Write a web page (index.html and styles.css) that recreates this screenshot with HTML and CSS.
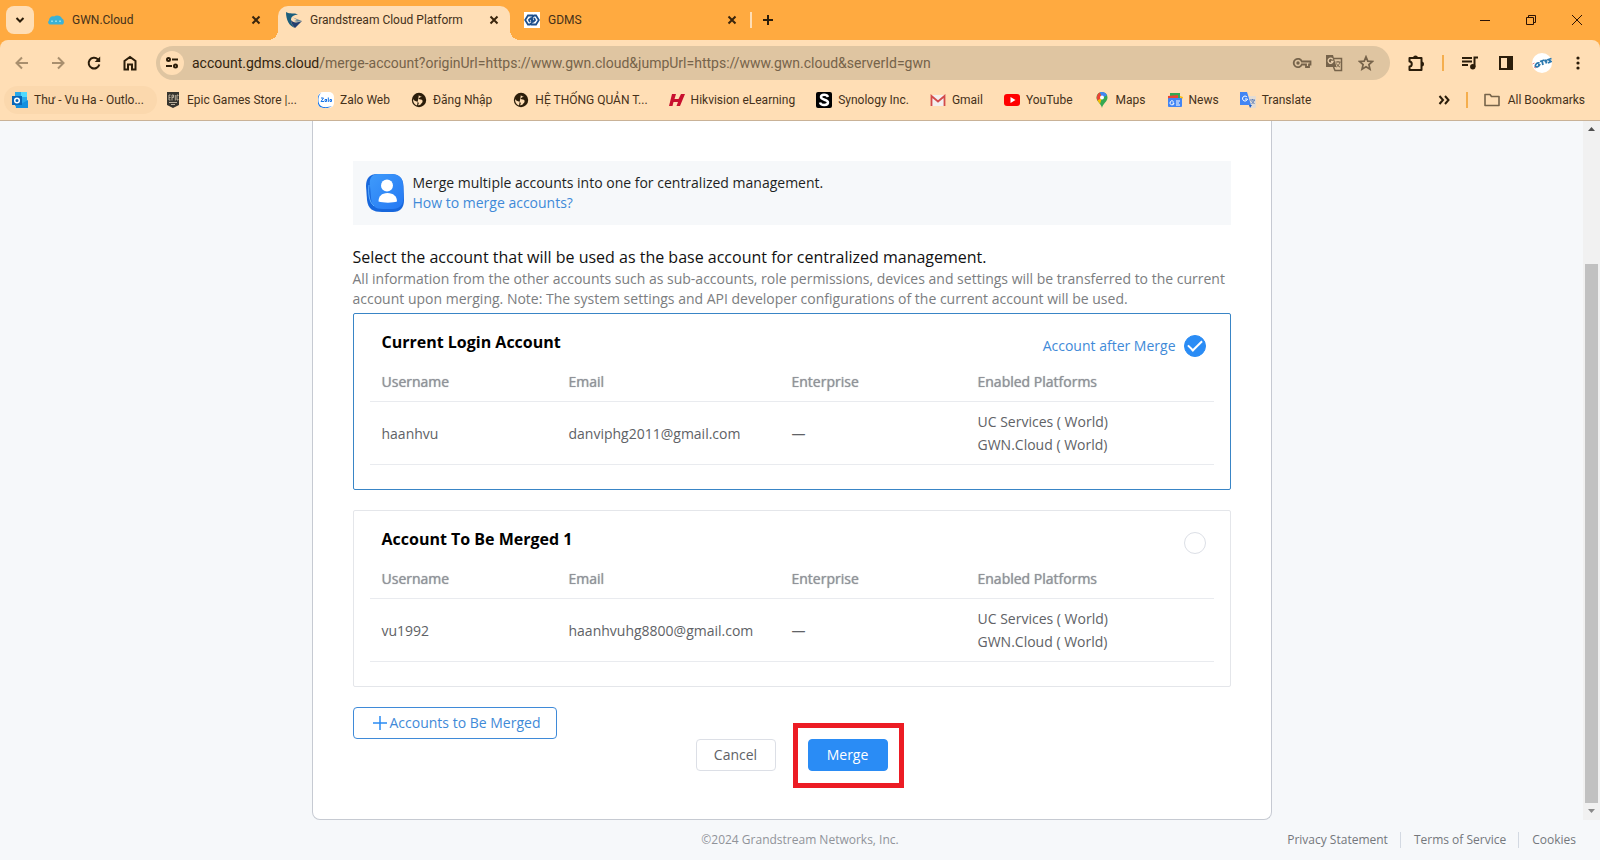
FILE: index.html
```html
<!DOCTYPE html>
<html lang="en">
<head>
<meta charset="utf-8">
<title>Grandstream Cloud Platform</title>
<link rel="stylesheet" href="styles.css">
</head>
<body>
<header class="browser">
  <div class="tabstrip">
    <button class="tab-search" aria-label="Search tabs"><svg width="12" height="12" viewBox="0 0 12 12"><path d="M2.500 4l3.500 3.500L9.500 4" fill="none" stroke="#2b1d0a" stroke-width="2"/></svg></button>
    <div class="tabs">
      <div class="tab">
        <svg class="icon" viewBox="0 0 16 16"><path d="M2 12.500c-2 0-2.500-3-1-4C1 5.500 4 3.500 6 4.500c3-2 7-.5 8 2 2.500 1 2.500 6 0 6z" fill="#3bb2d6"/><path d="M3 8.500h2v1.500H3zM7 8.500h2v1.500H7zM11 8.500h2v1.500h-2z" fill="#8ddbe9"/></svg>
        <span class="tab-title">GWN.Cloud</span>
        <button class="tab-close" aria-label="Close GWN.Cloud"><svg width="10" height="10" viewBox="0 0 10 10"><path d="M1.500 1.500l7 7m0-7l-7 7"/></svg></button>
      </div>
      <div class="tab active">
        <svg class="icon" viewBox="0 0 16 16"><path d="M0 0c4 2.500 8 .5 12 2.500C8 3 5 4 5 8c0 3 1.500 5.500 4 8C3 14 0 8 0 0z" fill="#1c5e7c"/><path d="M5 8c2 3 6 3 11 1l-7 7c-2.500-2.500-4-5-4-8z" fill="#243f70"/><path d="M7 5.500l9 3.500c-3 1-6 1-8 0l3-1z" fill="#6c8d9c"/></svg>
        <span class="tab-title">Grandstream Cloud Platform</span>
        <button class="tab-close" aria-label="Close Grandstream Cloud Platform"><svg width="10" height="10" viewBox="0 0 10 10"><path d="M1.500 1.500l7 7m0-7l-7 7"/></svg></button>
      </div>
      <div class="tab">
        <svg class="icon" viewBox="0 0 16 16"><path d="M0 0h16v16H0z" fill="#fff"/><g fill="none" stroke="#1d4f8c" stroke-width="1.800"><path d="M9 3.500H4L1.200 8 4 12.500h2l2-2V7.500L6.500 6.500 5 8l1 2"/><path d="M7 12.500h5L14.800 8 12 3.500h-2l-2 2v3l1.500 1L11 8l-1-2"/></g></svg>
        <span class="tab-title">GDMS</span>
        <button class="tab-close" aria-label="Close GDMS"><svg width="10" height="10" viewBox="0 0 10 10"><path d="M1.500 1.500l7 7m0-7l-7 7"/></svg></button>
      </div>
      <span class="tab-divider"></span>
      <button class="new-tab" aria-label="New tab"><svg width="12" height="12" viewBox="0 0 12 12"><path d="M6 1v10M1 6h10" stroke="#2b1d0a" stroke-width="2"/></svg></button>
    </div>
    <div class="window-controls">
      <button aria-label="Minimize"><svg width="12" height="12" viewBox="0 0 12 12"><path d="M1 6.500h10"/></svg></button>
      <button aria-label="Restore"><svg width="12" height="12" viewBox="0 0 12 12"><path d="M1.500 3.500h7v7h-7zM3.500 3.500v-2h7v7h-2"/></svg></button>
      <button aria-label="Close window"><svg width="12" height="12" viewBox="0 0 12 12"><path d="M1 1l10 10M11 1L1 11"/></svg></button>
    </div>
  </div>

  <div class="toolbar">
    <div class="nav">
      <button aria-label="Back"><svg class="dim" width="16" height="16" viewBox="0 0 16 16"><path d="M14 8H3M8 2.500L2.500 8 8 13.500"/></svg></button>
      <button aria-label="Forward"><svg class="dim" width="16" height="16" viewBox="0 0 16 16"><path d="M2 8h11M8 2.500L13.500 8 8 13.500"/></svg></button>
      <button aria-label="Reload"><svg width="16" height="16" viewBox="0 0 16 16"><path d="M13.300 9.500A5.400 5.400 0 1 1 11.800 4.200L13 5.500"/><path d="M14.200 1.500v5.500H8.700z" class="tip"/></svg></button>
      <button aria-label="Home"><svg width="16" height="16" viewBox="0 0 16 16"><path d="M2.500 14.500V6L8 2l5.500 4v8.500H10v-5H6v5z"/></svg></button>
    </div>
    <div class="omnibox">
      <button class="site-info" aria-label="Site information"><svg width="16" height="16" viewBox="0 0 16 16"><g fill="none" stroke="#2b1d0a" stroke-width="2"><circle cx="4.500" cy="4.500" r="1.500"/><path d="M8 4.500h6M2 11h6"/><circle cx="11.500" cy="11" r="1.500"/></g></svg></button>
      <div class="url">account.gdms.cloud<span>/merge-account?originUrl=https://www.gwn.cloud&amp;jumpUrl=https://www.gwn.cloud&amp;serverId=gwn</span></div>
      <div class="omni-actions">
        <button aria-label="Passwords"><svg width="20" height="16" viewBox="0 0 20 16"><g fill="none" stroke="#76634a" stroke-width="1.800"><path d="M9.800 6.500H18.500v3H17V12h-3V9.500H9.800A4.200 4.200 0 1 1 9.800 6.500z"/></g><circle cx="6" cy="8" r="1.700" fill="#76634a"/></svg></button>
        <button aria-label="Translate page"><svg width="18" height="18" viewBox="0 0 18 18"><path d="M7 4.500h9.500v12H10L8.500 13" fill="none" stroke="#76634a" stroke-width="1.500"/><path d="M1 1h7l3.500 12H1z" fill="#76634a"/><path d="M7.800 5.500A2.500 2.500 0 1 0 8 7.500H6" fill="none" stroke="#e9cfad" stroke-width="1.300"/><path d="M10.500 8h5M13 7v1m2 0c-.5 2-2 4-3.500 5M11.500 9.500c1 2 2 3 3.500 3.500" fill="none" stroke="#76634a"/></svg></button>
        <button aria-label="Bookmark this page"><svg width="16" height="16" viewBox="0 0 16 16"><path d="M8 1.800l1.800 4.300 4.700.4-3.600 3.100 1.100 4.600L8 11.800l-4 2.400 1.100-4.600L1.500 6.500l4.700-.4z" fill="none" stroke="#76634a" stroke-width="1.700"/></svg></button>
      </div>
    </div>
    <div class="tools">
      <button aria-label="Extensions"><svg width="18" height="18" viewBox="0 0 18 18"><path d="M2.500 4h12v12h-12v-3.500c3 0 3-5 0-5z" fill="none" stroke="#2b1d0a" stroke-width="2" stroke-linejoin="round"/><path d="M6 4a2.300 2.300 0 0 1 5 0zM14.500 7.500a2.300 2.300 0 0 1 0 5z" fill="#2b1d0a"/></svg></button>
      <span class="orange-divider"></span>
      <button aria-label="Media"><svg width="18" height="18" viewBox="0 0 18 18"><path d="M1 4h10M1 7.500h10M1 11h6M13.500 13V3.500H17" fill="none" stroke="#2b1d0a" stroke-width="2"/><circle cx="11.800" cy="12.800" r="2.700" fill="#2b1d0a"/></svg></button>
      <button aria-label="Side panel"><svg width="16" height="16" viewBox="0 0 16 16"><path d="M2 2h12v12H2z" fill="none" stroke="#2b1d0a" stroke-width="2"/><path d="M9 2h5v12H9z" fill="#2b1d0a"/></svg></button>
      <button aria-label="Profile"><svg width="20" height="20" viewBox="0 0 20 20"><circle cx="10" cy="10" r="10" fill="#fff"/><g fill="none" stroke="#2b78ae" stroke-width="1.800"><path d="M7.500 10c-3-.5-4.500 2-4 3.500 1 1 3.500 0 4-1.500H6M8 8.500l4.500-1.500M10 8l1 4M13.500 6.500l1 4M12.500 8.500l3-1M19.500 5.500l-3 1 2.500 2-3 1.500"/></g><path d="M.5 11l2-1M2 14l2 1" stroke="#e78080"/></svg></button>
      <button aria-label="Menu"><svg width="16" height="16" viewBox="0 0 16 16"><g fill="#2b1d0a"><circle cx="8" cy="3" r="1.600"/><circle cx="8" cy="8" r="1.600"/><circle cx="8" cy="13" r="1.600"/></g></svg></button>
    </div>
  </div>

  <nav class="bookmarks" aria-label="Bookmarks">
    <a class="hovered" href="#"><svg class="icon" viewBox="0 0 16 16"><path d="M3 0h12v14H3z" fill="#28a8ea"/><path d="M9 0h6v5H9z" fill="#50d9ff"/><path d="M3 9l6 3 7-4v8H4z" fill="#1490df"/><path d="M0 4h10v9H0z" fill="#0a66b7"/><circle cx="5" cy="8.500" r="2.300" fill="none" stroke="#fff" stroke-width="1.500"/></svg>Thư - Vu Ha - Outlo...</a>
    <a href="#"><svg class="icon" viewBox="0 0 16 16"><path d="M2 0h12v13l-6 3-6-3z" fill="#37352f"/><path d="M5.500 3H4v5h1.500M4 5.500h1.500M7 8.500V3h1.500v2.500H7M10.300 3v5.500M13 4V3h-1v5h1V7M4 10.500h8M6 12.500h4" fill="none" stroke="#b9ad9b"/></svg>Epic Games Store |...</a>
    <a href="#"><svg class="icon" viewBox="0 0 16 16"><rect width="16" height="16" rx="5" fill="#fff"/><path d="M3 1C-1 5 0 12 3 14c3 2 8 1 11 0-4 3-9 2-12 1C-2 11-1 3 3 1z" fill="#1675e8"/><path d="M3 6h2.500L3 9.500h3M8.500 7.500H7v2h1.500V7M10.300 5.500V10M12 7.500h1.500v2H12z" fill="none" stroke="#1675e8"/></svg>Zalo Web</a>
    <a href="#"><svg class="icon" viewBox="0 0 16 16"><circle cx="8" cy="8" r="7.200" fill="#2b1d0a"/><path d="M8 2.500c-.5 1.500 1.500 1.500 3 2.500-1.500 0-3 .5-3.500 2 1 .5 3.500 0 4 1.500.5 2-1 2.500-1.500 3.500-.5 1-2 1.500-3 1 1-1 1-2 0-3-1.500-1-4-1-5-3 0 3 1 5.500 4 6.500" fill="#ffdeb5"/></svg>Đăng Nhập</a>
    <a href="#"><svg class="icon" viewBox="0 0 16 16"><circle cx="8" cy="8" r="7.200" fill="#2b1d0a"/><path d="M8 2.500c-.5 1.500 1.500 1.500 3 2.500-1.500 0-3 .5-3.500 2 1 .5 3.500 0 4 1.500.5 2-1 2.500-1.500 3.500-.5 1-2 1.500-3 1 1-1 1-2 0-3-1.500-1-4-1-5-3 0 3 1 5.500 4 6.500" fill="#ffdeb5"/></svg>HỆ THỐNG QUẢN T...</a>
    <a href="#"><svg class="icon" viewBox="0 0 16 16"><path d="M3 2h4L5.500 7h4L12 2h4l-5 12H7.500l1.500-4H4.500L3.500 14H0z" fill="#c8102e"/></svg>Hikvision eLearning</a>
    <a href="#"><svg class="icon" viewBox="0 0 16 16"><rect width="16" height="16" rx="2" fill="#000"/><path d="M12 5c-1-3-7-3-7 0s7 2.500 7 5.500-7 3.500-8 0" fill="none" stroke="#fff" stroke-width="2.500"/></svg>Synology Inc.</a>
    <a href="#"><svg class="icon" viewBox="0 0 16 16"><path d="M1 3h14v11H1z" fill="#f4efed"/><path d="M1.500 14V4L8 9.500 14.500 4v10" fill="none" stroke="#d34b4b" stroke-width="1.800"/></svg>Gmail</a>
    <a href="#"><svg class="icon" viewBox="0 0 16 16"><rect y="2" width="16" height="12" rx="3" fill="#f00"/><path d="M6.500 5l5 3-5 3z" fill="#fff"/></svg>YouTube</a>
    <a href="#"><svg class="icon" viewBox="0 0 16 16"><path d="M8 0a5.500 5.500 0 0 1 5.500 5.500C13.500 10 9 11 8 16 7 11 2.500 10 2.500 5.500A5.500 5.500 0 0 1 8 0z" fill="#34a853"/><path d="M3 4a5.500 5.500 0 0 1 3-3.700L8 5.500 4 9C2.500 7 2.500 5 3 4z" fill="#ea4335"/><path d="M8 5.500L3.500 8.500 6 12z" fill="#fbbc04"/><path d="M6 .3c3-1 6 .5 7 3L8 6z" fill="#4285f4"/><circle cx="8" cy="5.500" r="2" fill="#fff"/></svg>Maps</a>
    <a href="#"><svg class="icon" viewBox="0 0 16 16"><path d="M3 1h10v6H3z" fill="#34a853"/><path d="M1 4l10-1v4H1z" fill="#ea4335"/><path d="M13 4l3 1-2 5z" fill="#fbbc04"/><rect x="1" y="6" width="14" height="9" rx="1" fill="#4285f4"/><path d="M6.500 9.500A2 2 0 1 0 7 11H5.500M9 9h4M9 11h3M9 13h4" fill="none" stroke="#fff"/></svg>News</a>
    <a href="#"><svg class="icon" viewBox="0 0 16 16"><path d="M7 4h9v12h-6z" fill="#e3dcd4"/><path d="M0 0h7l4 13H0z" fill="#4285f4"/><path d="M9 13h3l-2 3z" fill="#1a5bc4"/><path d="M7 5A2.500 2.500 0 1 0 7.500 7H5" fill="none" stroke="#fff"/><path d="M10 8h5M12.500 7v1m2 0c-1 2-2 3-3 4m0-3l3 3" fill="none" stroke="#5b7db8"/></svg>Translate</a>
    <span class="spacer"></span>
    <button class="more" aria-label="More bookmarks"><svg width="12" height="12" viewBox="0 0 12 12"><path d="M1.500 2L5 6l-3.500 4M7 2l3.500 4L7 10" fill="none" stroke="#2b1d0a" stroke-width="2"/></svg></button>
    <span class="orange-divider"></span>
    <a class="all" href="#"><svg class="icon" viewBox="0 0 16 16"><path d="M1 2.500h5l1.500 2H15v9H1z" fill="none" stroke="#76634a" stroke-width="1.600" stroke-linejoin="round"/></svg>All Bookmarks</a>
  </nav>
</header>

<div class="viewport">
  <main class="page">
    <section class="panel">
      <div class="banner">
        <svg width="40" height="40" viewBox="0 0 40 40"><defs><linearGradient id="badge" x1="0" y1="0" x2="1" y2="1"><stop offset="0" stop-color="#3f9bfb"/><stop offset="1" stop-color="#2478f3"/></linearGradient></defs><path d="M12 1h14c8 0 12 4 12.500 12l.5 14c0 8-4 12-11 12H17C8 39 3 36 2 27L1 13C1 5 5 1 12 1z" fill="#1767dc"/><path d="M13 1h13c8 0 12 4 12 11l.5 12c0 8-4 12-11 12H18C10 36 7 33 6 25L5 13C4 6 6 1 13 1z" fill="url(#badge)"/><path d="M4 12c-1 8 0 17 5 21" fill="none" stroke="#5db0ff"/><circle cx="22" cy="12.500" r="6" fill="#fff"/><path d="M13.500 28.500c0-5 3-8.500 9-8.500s9.500 3.500 9.500 8.500c-4 1.500-14 1.500-18.500 0z" fill="#fff"/></svg>
        <div>
          <p>Merge multiple accounts into one for centralized management.</p>
          <a href="#">How to merge accounts?</a>
        </div>
      </div>
      <h1>Select the account that will be used as the base account for centralized management.</h1>
      <p class="note">All information from the other accounts such as sub-accounts, role permissions, devices and settings will be transferred to the current account upon merging. Note: The system settings and API developer configurations of the current account will be used.</p>

      <article class="account selected">
        <div class="account-head">
          <h2>Current Login Account</h2>
          <label class="choice">Account after Merge <input type="radio" name="base" checked></label>
        </div>
        <table>
          <thead><tr><th class="c-user">Username</th><th class="c-mail">Email</th><th class="c-ent">Enterprise</th><th>Enabled Platforms</th></tr></thead>
          <tbody><tr><td>haanhvu</td><td>danviphg2011@gmail.com</td><td>—</td><td>UC Services ( World)<br>GWN.Cloud ( World)</td></tr></tbody>
        </table>
      </article>

      <article class="account">
        <div class="account-head">
          <h2>Account To Be Merged 1</h2>
          <label class="choice"><input type="radio" name="base" aria-label="Account To Be Merged 1"></label>
        </div>
        <table>
          <thead><tr><th class="c-user">Username</th><th class="c-mail">Email</th><th class="c-ent">Enterprise</th><th>Enabled Platforms</th></tr></thead>
          <tbody><tr><td>vu1992</td><td>haanhvuhg8800@gmail.com</td><td>—</td><td>UC Services ( World)<br>GWN.Cloud ( World)</td></tr></tbody>
        </table>
      </article>

      <button class="btn add"><svg width="14" height="14" viewBox="0 0 14 14"><path d="M7 0v14M0 7h14" stroke="#2b8cf3" stroke-width="1.500"/></svg>Accounts to Be Merged</button>
      <div class="actions">
        <button class="btn">Cancel</button>
        <div class="highlighted"><button class="btn primary">Merge</button></div>
      </div>
    </section>
  </main>
  <div class="scrollbar" aria-hidden="true">
    <svg width="17" height="17" viewBox="0 0 17 17"><path d="M5 10l3.500-4 3.500 4z" fill="#505050"/></svg>
    <div class="track"><div class="thumb"></div></div>
    <svg width="17" height="17" viewBox="0 0 17 17"><path d="M5 6h7l-3.500 4z" fill="#8a8a8a"/></svg>
  </div>
</div>

<footer class="footer">
  <span></span>
  <span class="copyright">©2024 Grandstream Networks, Inc.</span>
  <nav class="legal" aria-label="Legal"><a href="#">Privacy Statement</a><a href="#">Terms of Service</a><a href="#">Cookies</a></nav>
</footer>
</body>
</html>
```

FILE: styles.css
```css
* { box-sizing: border-box; }

body {
  margin: 0;
  min-height: 100vh;
  display: flex;
  flex-direction: column;
  background: #f6f8fa;
  color: #606266;
  font: 14px/20px "Open Sans", "Noto Sans", sans-serif;
}

button {
  padding: 0;
  border: 0;
  background: none;
  font: inherit;
  color: inherit;
  display: flex;
  align-items: center;
  justify-content: center;
}

a { text-decoration: none; color: inherit; }
h1, h2, p { margin: 0; }
svg { display: block; flex: none; }

/* Browser frame */
.browser {
  background: #ffaa40;
  color: #45311a;
  font: 12px/16px Roboto, "Noto Sans", sans-serif;
}

.tabstrip {
  display: flex;
  align-items: center;
  height: 40px;
  padding-left: 6px;
}

.tab-search {
  width: 28px;
  height: 28px;
  margin-right: 6px;
  border-radius: 8px;
  background: #ffdeb5;
}

.tabs {
  flex: 1;
  align-self: stretch;
  display: flex;
  align-items: center;
  gap: 6px;
  padding-top: 6px;
}

.tab {
  position: relative;
  flex: 0 1 232px;
  align-self: stretch;
  display: flex;
  align-items: center;
  gap: 8px;
  padding: 0 8px 6px;
}

.tab.active {
  background: #ffdeb5;
  border-radius: 10px 10px 0 0;
}

.tab.active::before,
.tab.active::after {
  content: "";
  position: absolute;
  bottom: 0;
  width: 10px;
  height: 10px;
}

.tab.active::before {
  right: 100%;
  background: radial-gradient(circle at 0 0, transparent 10px, #ffdeb5 10px);
}

.tab.active::after {
  left: 100%;
  background: radial-gradient(circle at 100% 0, transparent 10px, #ffdeb5 10px);
}

.icon { width: 16px; height: 16px; }

.tab-title {
  flex: 1;
  overflow: hidden;
  white-space: nowrap;
}

.tab-close {
  width: 16px;
  height: 16px;
}

.tab-close path {
  stroke: #3a250c;
  stroke-width: 2;
}

.tab-divider {
  width: 2px;
  height: 16px;
  margin: 0 0 6px -4px;
  background: #ffdeb5;
}

.new-tab {
  width: 20px;
  height: 20px;
  margin-bottom: 6px;
}

.window-controls { display: flex; }

.window-controls button {
  width: 46px;
  height: 40px;
}

.window-controls path {
  fill: none;
  stroke: #2b1204;
}

.toolbar {
  display: flex;
  align-items: center;
  height: 46px;
  padding: 0 12px 0 4px;
  background: #ffdeb5;
  border-radius: 8px 8px 0 0;
}

.nav { display: flex; }

.nav button {
  width: 36px;
  height: 32px;
}

.nav path {
  fill: none;
  stroke: #2b1d0a;
  stroke-width: 2;
}

.nav .dim path { stroke: #a98f6e; }

.nav .tip {
  fill: #2b1d0a;
  stroke: none;
}

.omnibox {
  flex: 1;
  display: flex;
  align-items: center;
  height: 34px;
  margin-left: 8px;
  padding: 0 14px 0 4px;
  border-radius: 17px;
  background: #dfc5a1;
  font-size: 14px;
  line-height: 20px;
  color: #33240f;
}

.site-info {
  width: 24px;
  height: 24px;
  margin-right: 8px;
  border-radius: 12px;
  background: #ffdeb5;
}

.url {
  flex: 1;
  overflow: hidden;
  white-space: nowrap;
}

.url span { color: #76634a; }

.omni-actions {
  display: flex;
  gap: 12px;
}

.omni-actions button {
  width: 20px;
  height: 20px;
}

.tools {
  display: flex;
  align-items: center;
  gap: 16px;
  margin-left: 16px;
}

.tools button {
  width: 20px;
  height: 20px;
}

.orange-divider {
  width: 2px;
  height: 16px;
  background: #f5ae4d;
}

.bookmarks {
  display: flex;
  align-items: center;
  height: 35px;
  padding: 0 15px 6px 4px;
  border-bottom: 1px solid #c9b297;
  background: #ffdeb5;
}

.bookmarks a {
  display: flex;
  align-items: center;
  gap: 6px;
  height: 28px;
  padding: 0 13px 0 8px;
  border-radius: 14px;
  white-space: nowrap;
}

.bookmarks .hovered { background: #fbd8ad; }
.bookmarks .spacer { flex: 1; }
.bookmarks .more { width: 20px; height: 20px; margin-right: 12px; }

.bookmarks .all {
  gap: 8px;
  padding: 0;
  margin-left: 16px;
}

/* Page */
.viewport {
  flex: 1;
  display: flex;
}

.page {
  flex: 1;
  display: flex;
  justify-content: center;
}

.panel {
  flex: 0 1 960px;
  padding: 40px 40px 48px;
  border: 1px solid #c6cad2;
  border-top: 0;
  border-radius: 0 0 8px 8px;
  background: #fff;
}

.banner {
  display: flex;
  gap: 8px;
  padding: 12px;
  background: #f6f8fa;
  color: #1d1f23;
}

.banner a { color: #3f8ad8; }

h1 {
  margin-top: 20px;
  font-size: 16px;
  line-height: 24px;
  font-weight: 400;
  color: #111;
}

.note {
  margin-bottom: 4px;
  color: #7b7d80;
}

.account {
  margin-bottom: 20px;
  padding: 0 16px 24px;
  border: 1px solid #e4e6ea;
  border-radius: 2px;
}

.account.selected { border-color: #3985c6; }

.account-head {
  display: flex;
  justify-content: space-between;
  height: 49px;
  padding: 16px 8px 0 12px;
}

h2 {
  font-size: 16px;
  line-height: 24px;
  font-weight: 700;
  color: #000;
}

.choice {
  display: flex;
  align-items: center;
  gap: 8px;
  height: 32px;
  color: #3f8ad8;
}

.choice input {
  appearance: none;
  width: 22px;
  height: 22px;
  margin: 0;
  border: 1px solid #dcdfe6;
  border-radius: 11px;
  background: #fff;
  display: grid;
  place-items: center;
}

.choice input:checked {
  border-color: #2a8cf5;
  background: #2a8cf5;
}

.choice input:checked::before {
  content: "";
  width: 12px;
  height: 6px;
  margin-bottom: 4px;
  border: solid #fff;
  border-width: 0 0 2px 2px;
  transform: rotate(-45deg);
}

table {
  width: 100%;
  table-layout: fixed;
  border-collapse: separate;
  border-spacing: 0;
}

th, td {
  padding: 8px 12px;
  border-bottom: 1px solid #e9ebef;
  text-align: left;
  line-height: 23px;
}

th {
  height: 39px;
  padding: 0 12px 2px;
  font-weight: 400;
  color: #909399;
  text-shadow: 0 0 1px #909399;
}

.c-user { width: 187px; }
.c-mail { width: 223px; }
.c-ent { width: 186px; }

.btn {
  height: 32px;
  min-width: 80px;
  border: 1px solid #dcdfe6;
  border-radius: 4px;
  background: #fff;
}

.btn.add {
  gap: 3px;
  padding: 0 16px 0 19px;
  border-color: #3f8ad8;
  color: #3f8ad8;
}

.btn.primary {
  border-color: #2a8cf5;
  background: #2a8cf5;
  color: #fff;
}

.actions {
  display: flex;
  justify-content: center;
  gap: 32px;
}

.highlighted { position: relative; }

.highlighted::after {
  content: "";
  position: absolute;
  inset: -16px -16px -17px -15px;
  border: 5px solid #ec1c24;
  pointer-events: none;
}

.scrollbar {
  display: flex;
  flex-direction: column;
  width: 17px;
  background: #f1f1f1;
}

.track {
  flex: 1;
  display: flex;
  flex-direction: column;
  justify-content: flex-end;
  padding: 0 2px;
}

.thumb {
  height: 81%;
  background: #c1c1c1;
}

.footer {
  display: grid;
  grid-template-columns: 1fr auto 1fr;
  align-items: center;
  height: 40px;
  padding: 0 24px;
  font-size: 12px;
  line-height: 16px;
  color: #74777c;
}

.copyright { color: #909399; }

.legal {
  display: flex;
  justify-content: flex-end;
}

.legal a + a {
  margin-left: 12px;
  padding-left: 13px;
  border-left: 1px solid #d3d9e2;
}
```
